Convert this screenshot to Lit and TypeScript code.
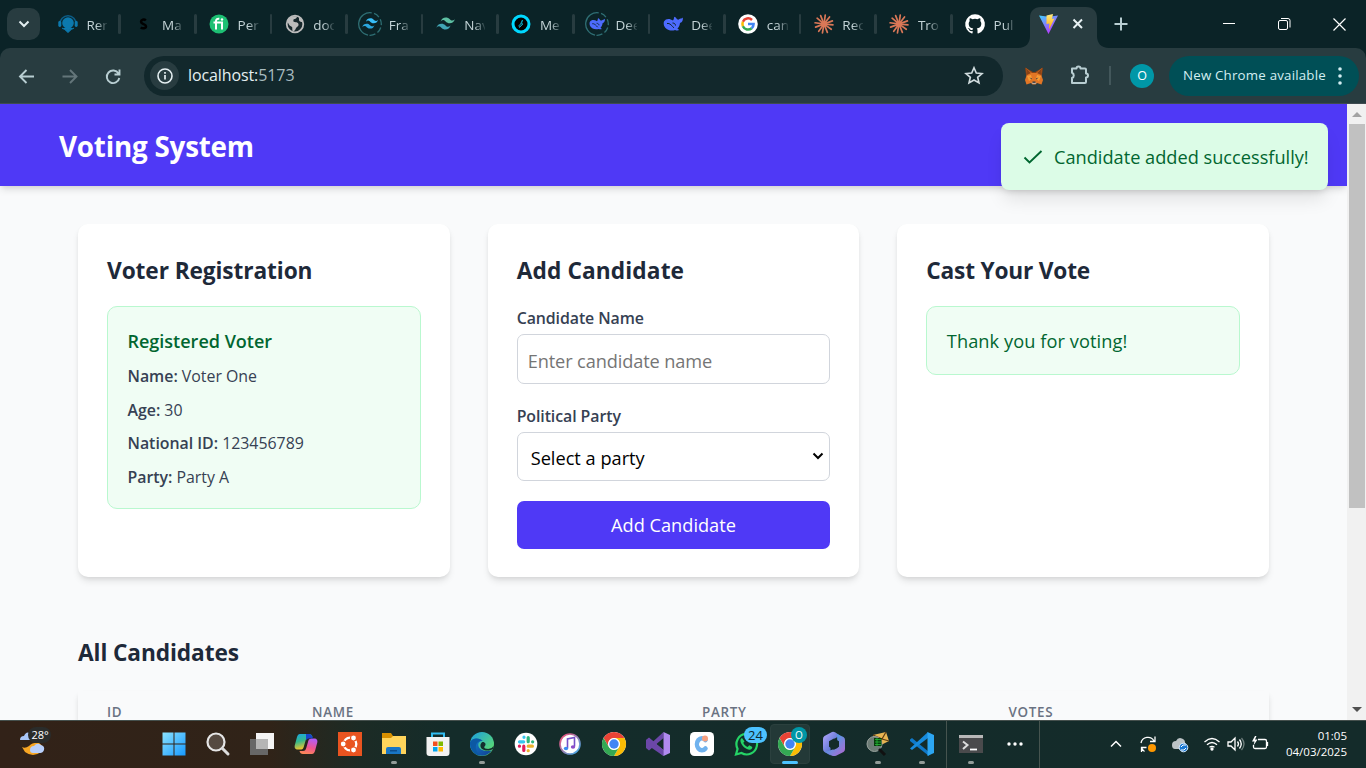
import { LitElement, html, css, svg } from "lit";
import { customElement } from "lit/decorators.js";

const swirl = (a: string, b: string) => svg`<path fill=${a} d="M6 8.600C7 5.400 9 4 12 4c4 0 4.600 3 6.600 3.500 1.500.3 2.700-.2 3.900-1.500-1 3.300-3 4.700-6 4.700-4 0-4.600-3-6.600-3.500C8.400 6.900 7.200 7.300 6 8.600z"/><path fill=${b} d="M1 14.900c1-3.200 3-4.600 6-4.600 4 0 4.600 3 6.600 3.500 1.500.3 2.700-.2 3.900-1.500-1 3.300-3 4.700-6 4.700-4 0-4.600-3-6.600-3.500-1.500-.4-2.700.1-3.900 1.400z" transform="translate(0 1)"/>`;
const ring = svg`<circle cx="12" cy="12" r="11.300" fill="none" stroke="#2f6f74" stroke-width="1.300" stroke-dasharray="35 2.500 6 2.500 6 2.500 6 2.500 6 4" transform="rotate(100 12 12)"/>`;
const whale = svg`<path fill="#4d6bfe" d="M2.500 9.500C4.500 6 8.500 6.500 11.500 8.500c1.500-1.500.5-3 1.500-3.700 1.500.3 1.800 2 3 2.700 1.500.7 1.800-1.200 3.500-1 .8-.1 1.200-.5 1.800-1.100.4 2.400-.4 5-2.800 5.600-.3 3-1.500 4.500-2.600 5.500l1.800 1.600c-1.500.8-3 .4-4.100-.1C9 19.500 4 17.500 2.600 13.700c-.4-1.300-.6-2.900-.1-4.200z"/><path d="M5.500 11.500c3-.6 5 2.500 7 4.500" stroke="#0b2327" stroke-width="1" fill="none"/><path d="M11 11c2 0 3 1.200 3 2.500" stroke="#0b2327" stroke-width="1" fill="none"/>`;
const burst = svg`<g stroke="#d97757" stroke-width="1.700" stroke-linecap="round">${[0, 30, 62, 88, 118, 150, 182, 208, 242, 270, 302, 330].map(a => svg`<path d="M12 11V3" transform="rotate(${a + 8} 12 12)"/>`)}</g><circle cx="12" cy="12" r="3" fill="#d97757"/>`;
const tabs: [string, unknown][] = [
  ["Rem", svg`<circle cx="12" cy="11" r="5.800" fill="#0c79ae"/><path d="M3.800 12a8.200 8.200 0 0 1 16.400 0" stroke="#0c5c86" stroke-width="1.600" fill="none"/><rect x="2.300" y="9" width="3" height="6" rx="1.400" fill="#0c79ae"/><rect x="18.700" y="9" width="3" height="6" rx="1.400" fill="#0c79ae"/><path d="M9.300 18h5.400L12 20.500zM6 16c3.500 2.600 8.500 2.600 12 0" stroke="#0c79ae" fill="#0c79ae"/>`],
  ["Ma", svg`<path d="M14.800 8.500c-1.600-1.800-4.800-.8-4.800 1.300 0 2.500 5 2.100 5 4.500 0 2.200-3.600 2.700-5.200 1" stroke="#000" stroke-width="2.500" fill="none"/>`],
  ["Per", svg`<circle cx="12" cy="12" r="9.500" fill="#1dbf73"/><path d="M6.500 10.500H15v7M9 17.500V9c0-2 1.500-2.500 3.300-2.300" stroke="#fff" stroke-width="2" fill="none"/><circle cx="15" cy="7.500" r="1.200" fill="#fff"/>`],
  ["doc", svg`<circle cx="12" cy="12" r="8.300" fill="#17282c" stroke="#bcbcbc" stroke-width="1.800"/><path fill="#bcbcbc" d="M4 9c2-4 6-5.500 10-4.500-.2 2-1.500 2.500-3.300 2.700-.5 1.500-.8 2.600 1 2.700 3 .2 4.500 1.500 3.600 3.800-1 1.600-2 1-2.700 3.300-.6 1.800-2 2.400-3 2.300-.5-2-.2-3-.4-4-.9-1.400-2.900-1-3.400-3zM16 5c2 1 3.600 3 4 5-2 .2-3.800-.5-4-2z"/>`],
  ["Fra", svg`${ring}<g transform="translate(3.500 3.300) scale(.74)">${swirl("#38bdf8", "#2aa5dc")}</g>`],
  ["Nav", svg`<g transform="translate(1.500 2) scale(.86)">${swirl("#5dbfa2", "#41a5b4")}</g>`],
  ["Me", svg`<circle cx="12" cy="12" r="8" fill="#000" stroke="#00d8ff" stroke-width="3"/><path d="M13.500 8l-1 3.500 1.500.5-3.500 3.500-.5-2 1.500-1.500z" fill="#0a4654" stroke="#0aa7c2" stroke-width=".9"/>`],
  ["Dee", svg`${ring}<g transform="translate(2.800 2.500) scale(.8)">${whale}</g>`],
  ["Dee", svg`<g transform="translate(.5 0)">${whale}</g>`],
  ["can", svg`<circle cx="12" cy="12" r="9.800" fill="#fff"/><g fill="none" stroke-width="2.500"><path stroke="#ea4335" d="M6.900 9.800A5.600 5.600 0 0 1 16 8"/><path stroke="#fbbc05" d="M6.900 14.200a5.600 5.600 0 0 1 0-4.400"/><path stroke="#34a853" d="M15.700 16.200a5.600 5.600 0 0 1-8.800-2"/><path stroke="#4285f4" d="M12 12h5.600a5.600 5.600 0 0 1-1.900 4.200"/></g>`],
  ["Rec", burst], ["Tro", burst],
  ["Pul", svg`<path fill="#fff" d="M12 2.300a9.800 9.800 0 0 0-3.100 19.100c.5.1.7-.2.7-.5v-1.800c-2.700.6-3.300-1.200-3.300-1.200-.4-1.100-1.100-1.400-1.100-1.400-.9-.6.1-.6.1-.6 1 .1 1.500 1 1.500 1 .9 1.500 2.300 1.100 2.800.8.1-.6.4-1.100.6-1.300-2.200-.3-4.500-1.100-4.500-4.900 0-1.100.4-1.900 1-2.600-.1-.3-.4-1.300.1-2.700 0 0 .8-.3 2.700 1a9.300 9.300 0 0 1 5 0c1.900-1.300 2.700-1 2.700-1 .5 1.400.2 2.400.1 2.700.6.7 1 1.500 1 2.600 0 3.800-2.300 4.600-4.500 4.900.4.300.7.900.7 1.800v2.700c0 .3.200.6.700.5A9.800 9.800 0 0 0 12 2.300z"/>`],
];

@customElement("browser-chrome")
class BrowserChrome extends LitElement {
  static styles = css`
    :host { display: block; background: #0b2327; font-family: "Open Sans", "Noto Sans", sans-serif; }
    svg { display: block; flex: none; }
    .strip { height: 48px; display: flex; align-items: center; padding-left: 7px; }
    .search { width: 33px; height: 32px; border-radius: 10px; background: #283c40; display: grid; place-items: center; margin-right: 5.400px; }
    .tab { width: 75.600px; box-sizing: border-box; height: 48px; padding-left: 10.500px; display: flex; align-items: center; font-size: 13.500px; color: #c3d3d6; }
    .tab svg { width: 24px; height: 24px; }
    .label { width: 21px; margin-left: 6.500px; padding-top: 1px; overflow: hidden; white-space: nowrap; -webkit-mask-image: linear-gradient(90deg, #000 50%, #0002); mask-image: linear-gradient(90deg, #000 50%, #0002); }
    .bar { width: 2.500px; height: 20px; border-radius: 2px; background: #283c40; margin-left: auto; }
    .tab.last .bar { visibility: hidden; }
    .tab.last { width: 73px; }
    .active { width: 91px; height: 41px; align-self: flex-end; display: block; margin-left: -7.500px; }
    .new { margin-left: -8.500px; }
    .window { margin-left: auto; display: flex; }
    .tools { height: 55px; background: #283c40; border-radius: 10px 10px 0 0; border-bottom: 1px solid #3f4b50; display: flex; align-items: center; }
    .omni { width: 859px; height: 40px; border-radius: 20px; background: #12282c; display: flex; align-items: center; box-sizing: border-box; padding: 0 18px 0 6px; }
    .info { width: 29px; height: 29px; border-radius: 50%; background: #283c40; display: grid; place-items: center; }
    .url { font-size: 16px; letter-spacing: -.1px; color: #a9bcc0; margin-left: 9px; padding-bottom: 2px; flex: 1; }
    .host { color: #e5eff1; }
    .fox { margin-left: 21px; }
    .puzzle { margin-left: 23.500px; }
    .line { width: 2px; height: 19px; margin: 0 19px 0 17.500px; background: #43575b; }
    .avatar { width: 24px; height: 24px; border-radius: 50%; background: #0097a7; color: #fff; font-size: 12.500px; display: grid; place-items: center; }
    .update { margin-left: 15px; width: 190px; height: 40px; border-radius: 20px; background: #004f56; color: #d3eef2; font-size: 13.300px; letter-spacing: .2px; display: flex; align-items: center; box-sizing: border-box; padding: 0 0 2px 14px; white-space: nowrap; }
    .update svg { margin: 2px 16px 0 auto; }
  `;
  render() {
    return html`
      <div class="strip">
        <div class="search"><svg width="12" height="8" viewBox="0 0 12 8"><path d="M1.500 1.500L6 6l4.500-4.500" fill="none" stroke="#e3eef0" stroke-width="2"/></svg></div>
        ${tabs.map(([t, i], n) => html`<div class="tab ${n === tabs.length - 1 ? "last" : ""}"><svg viewBox="0 0 24 24">${i}</svg><span class="label">${t}</span><i class="bar"></i></div>`)}
        <svg class="active" viewBox="0 0 91 41"><path fill="#283c40" d="M0 41c8 0 12-5 12-12V11C12 4 16 0 23 0h45c7 0 11 4 11 11v18c0 7 4 12 12 12z"/>
          <defs><linearGradient id="v" x1="0" y1="0" x2=".6" y2="1"><stop stop-color="#41d1ff"/><stop offset="1" stop-color="#bd34fe"/></linearGradient><linearGradient id="y" x1="0" y1="0" x2="0" y2="1"><stop stop-color="#ffea83"/><stop offset="1" stop-color="#ffa800"/></linearGradient></defs>
          <path fill="url(#v)" d="M21 8.500l10 1.300 9-1.300-9.500 18.500z"/><path fill="url(#y)" d="M28.500 8.500l6.500-1.500-1 5 2.500-.6-5.500 11 .4-6-2.900.7z"/>
          <path d="M55.500 12.500l8.500 8.500m0-8.500L55.500 21" stroke="#e8f2f4" stroke-width="2"/></svg>
        <svg class="new" width="40" height="32" viewBox="0 0 40 32"><path d="M20 9.500v13M13.500 16h13" stroke="#b8ced2" stroke-width="2" fill="none"/></svg>
        <svg class="window" width="166" height="32" viewBox="0 0 166 32"><path d="M23 15.500h12M133.500 10.500l12 12m0-12l-12 12" stroke="#fff" stroke-width="1.200"/><g fill="none" stroke="#fff"><rect x="78.500" y="12.500" width="9" height="9" rx="1.500"/><path d="M81 10.500h7q2 0 2 2v7"/></g></svg>
      </div>
      <div class="tools">
        <svg width="144" height="40" viewBox="0 0 144 40" fill="none" stroke-width="1.900"><path stroke="#b8ced2" d="M34 20.500H20M26.500 14L20 20.500l6.500 6.500"/><path stroke="#64767a" d="M62.500 20.500h14M70 14l6.500 6.500L70 27"/><path stroke="#b8ced2" d="M118.500 17.500a6.300 6.300 0 1 0 .8 4.500M119.500 13.500v5h-5"/></svg>
        <div class="omni"><div class="info"><svg width="18" height="18" viewBox="0 0 18 18"><circle cx="9" cy="9" r="7" fill="none" stroke="#e5eff1" stroke-width="1.600"/><path d="M9 8v4.500M9 5v1.700" stroke="#e5eff1" stroke-width="1.700"/></svg></div>
          <span class="url"><span class="host">localhost:</span>5173</span>
          <svg width="22" height="22" viewBox="0 0 24 24"><path fill="none" stroke="#d0dcde" stroke-width="1.800" d="M12 3l2.500 5.700 6.200.6-4.700 4.100 1.400 6.100-5.400-3.200-5.400 3.200L8 13.400 3.300 9.300l6.200-.6z"/></svg></div>
        <svg class="fox" width="20" height="20" viewBox="0 0 20 20"><path fill="#8b4316" d="M1 1.500L9 6h2l8-4.500-1 7-2 4H4L2 8.500z"/><path fill="#e27625" d="M2 2l6 5h4l6-5-1 6 2 6-1.500 4.500L13 17l-1.500 1.500h-3L7 17l-4.500 1.500L1 14l2-6z"/><path fill="#f89c35" d="M3 10l4-1 1 4-3 2zM17 10l-4-1-1 4 3 2z"/><path fill="#8b4316" d="M2 2l5 5-4 2zM18 2l-5 5 4 2z"/><path fill="#c0ad9e" d="M7.500 16.500h5L11.500 18h-3z"/><path fill="#233447" d="M5.500 11.500l2.500 1-.3 1zM14.500 11.500l-2.500 1 .3 1zM8.500 15.500h3v1.300h-3z"/></svg>
        <svg class="puzzle" width="24" height="24" viewBox="0 0 24 24"><path fill="none" stroke="#b8ced2" stroke-width="2" stroke-linejoin="round" d="M4.500 5.500H9a2 2 0 0 1 4 0h4.500a1 1 0 0 1 1 1v4a2 2 0 0 1 0 4v4.500a1 1 0 0 1-1 1h-13v-5a2.800 2.800 0 0 0 0-5.200z" transform="translate(-.5 -1)"/></svg>
        <i class="line"></i><div class="avatar">O</div>
        <div class="update">New Chrome available<svg width="6" height="18" viewBox="0 0 6 18" fill="#d3eef2"><circle cx="3" cy="2" r="1.800"/><circle cx="3" cy="9" r="1.800"/><circle cx="3" cy="16" r="1.800"/></svg></div>
      </div>`;
  }
}

@customElement("voting-page")
class VotingPage extends LitElement {
  static styles = css`
    :host { display: flex; overflow: hidden; background: #f9fafb; color: #1e2939; font-family: "Open Sans", "Noto Sans", sans-serif; font-size: 18.200px; min-height: 0; }
    * { box-sizing: border-box; }
    .page { width: 1347px; position: relative; overflow: hidden; }
    header { height: 82px; background: #4f39f6; color: #fff; padding: 0 59px; display: flex; align-items: center; box-shadow: 0 5px 7px -1px #0000001a, 0 2px 5px -2px #0000001a; }
    h1 { margin: 0; padding-top: 4px; font-size: 27.800px; letter-spacing: -.22px; line-height: 1; font-weight: 700; }
    main { padding: 38px 78px 0; }
    .cards { display: grid; grid-template-columns: repeat(3, 1fr); gap: 38px; height: 353px; }
    .card { background: #fff; border-radius: 10px; padding: 28px 29px; box-shadow: 0 5px 7px -1px #0000001a, 0 2px 5px -2px #0000001a; }
    h2 { margin: 0; font-size: 22.700px; line-height: 38px; height: 54px; font-weight: 700; letter-spacing: -.1px; white-space: nowrap; }
    .w2 { letter-spacing: .12px; }
    .w3 { letter-spacing: -.2px; }
    .note { border: 1px solid #b9f8cf; background: #f0fdf4; border-radius: 10px; padding: 19px 19.500px; color: #016630; line-height: 31px; white-space: nowrap; }
    .voter { height: 203px; }
    .thanks { height: 69px; letter-spacing: .08px; }
    .voter h3 { margin: 0; font-size: 18px; font-weight: 600; line-height: 31px; height: 33px; }
    .voter p { margin: 0; height: 33.600px; line-height: 34px; font-size: 15.900px; letter-spacing: -.02px; color: #364153; }
    b { font-weight: 600; }
    label { display: block; font-size: 15.900px; font-weight: 600; letter-spacing: -.08px; color: #364153; line-height: 24px; height: 28px; }
    .field { height: 50px; border: 1px solid #d1d5dc; border-radius: 7px; display: flex; align-items: center; padding: 3px 5px 0 10px; color: #757575; margin-bottom: 20px; letter-spacing: -.12px; }
    .select { height: 49px; color: #000; padding-left: 13px; justify-content: space-between; letter-spacing: 0; }
    .select svg { margin-top: -4px; }
    .button { height: 48px; border-radius: 7px; background: #4f39f6; color: #fff; display: grid; place-items: center; }
    .list { height: 57px; margin-top: 57px; }
    .table { height: 60px; background: #f9fafb; box-shadow: 0 5px 7px -1px #0000001a, 0 2px 5px -2px #0000001a; display: grid; grid-template-columns: 205px 390px 306.500px 1fr; padding: 11px 29px; font-size: 13.400px; line-height: 20px; font-weight: 600; color: #6a7282; letter-spacing: .7px; }
    .toast { position: absolute; left: 1001px; top: 19px; width: 327px; height: 67px; background: #dcfce7; color: #016630; border-radius: 8px; display: flex; align-items: center; padding-left: 20px; box-shadow: 0 12px 18px -3px #0000001a, 0 5px 7px -4px #0000001a; white-space: nowrap; }
    .toast svg { margin-right: 9px; }
    .scroll { width: 19px; background: #f1f1f1; display: flex; flex-direction: column; align-items: center; justify-content: space-between; }
    .thumb { width: 16px; height: 384px; background: #c1c1c1; margin-bottom: auto; }
    .arrow { width: 19px; height: 20px; }
  `;
  render() {
    return html`<div class="page">
      <header><h1>Voting System</h1></header>
      <main>
        <div class="cards">
          <section class="card"><h2>Voter Registration</h2><div class="note voter"><h3>Registered Voter</h3>
            <p><b>Name:</b> Voter One</p><p><b>Age:</b> 30</p><p><b>National ID:</b> 123456789</p><p><b>Party:</b> Party A</p></div></section>
          <section class="card"><h2 class="w2">Add Candidate</h2>
            <label>Candidate Name</label><div class="field">Enter candidate name</div>
            <label>Political Party</label><div class="field select">Select a party<svg width="12" height="8" viewBox="0 0 12 8"><path d="M1.500 1.500L6 6l4.500-4.500" fill="none" stroke="#000" stroke-width="2"/></svg></div>
            <div class="button">Add Candidate</div></section>
          <section class="card"><h2 class="w3">Cast Your Vote</h2><div class="note thanks">Thank you for voting!</div></section>
        </div>
        <h2 class="list">All Candidates</h2>
        <div class="table"><span>ID</span><span>NAME</span><span>PARTY</span><span>VOTES</span></div>
      </main>
      <div class="toast"><svg width="24" height="24" viewBox="0 0 24 24"><path d="M3.500 12.500l5 5L20.500 6" fill="none" stroke="#016630" stroke-width="1.900"/></svg><span>Candidate added successfully!</span></div>
    </div>
    <div class="scroll"><svg class="arrow" viewBox="0 0 19 20"><path fill="#a3a3a3" d="M5 13l5-5 5 5z"/></svg><div class="thumb"></div><svg class="arrow" viewBox="0 0 19 20"><path fill="#505050" d="M5 7l5 5 5-5z"/></svg></div>`;
  }
}

const chromeLogo = svg`<circle cx="12" cy="12" r="12" fill="#fff"/><path fill="#ea4335" d="M1.600 6A12 12 0 0 1 22.400 6H12a6 6 0 0 0-5.200 9z"/><path fill="#fbbc04" d="M22.400 6A12 12 0 0 1 12 24l5.200-9A6 6 0 0 0 12 6z"/><path fill="#34a853" d="M1.600 6A12 12 0 0 0 12 24l5.200-9a6 6 0 0 1-10.400 0z"/><circle cx="12" cy="12" r="5.800" fill="#fff"/><circle cx="12" cy="12" r="4.700" fill="#4285f4"/>`;
const grad = (id: string, a: string, b: string) => svg`<linearGradient id=${id} x1="0" y1="0" x2="1" y2="1"><stop stop-color=${a}/><stop offset="1" stop-color=${b}/></linearGradient>`;
const apps: [string, unknown, string?][] = [
  ["start", svg`<defs>${grad("w", "#8be3ff", "#1699ff")}</defs><path fill="url(#w)" d="M.5.500H11.500V11.500H.5zM12.500.500h11v11h-11zM.5 12.500h11v11H.5zM12.500 12.500h11v11h-11z"/>`],
  ["search", svg`<circle cx="10" cy="10" r="8.500" fill="#ffffff2e" stroke="#e6e6e6" stroke-width="2.200"/><path d="M16.500 16.500l5.500 5.500" stroke="#dcdcdc" stroke-width="3" stroke-linecap="round"/>`],
  ["tasks", svg`<path fill="#f4f4f4" d="M6 1h18v16H6z"/><path fill="#676767" d="M0 7h18v16H0z"/><path fill="#b5b5b5" d="M6 7h12v10H6z"/>`],
  ["copilot", svg`<defs><linearGradient id="c1" x1="0" y1="0" x2=".3" y2="1"><stop stop-color="#18a5e8"/><stop offset=".5" stop-color="#35b98b"/><stop offset="1" stop-color="#f3c62c"/></linearGradient><linearGradient id="c2" x1=".6" y1="0" x2=".3" y2="1"><stop stop-color="#b35cf5"/><stop offset=".55" stop-color="#ef558f"/><stop offset="1" stop-color="#fb8a55"/></linearGradient></defs><path fill="url(#c1)" d="M6 2h9c2 0 3 1 3.500 3H15c-2 0-2.700 1-3.400 3.500L10 14c-.7 3-1.700 3.500-4 3.500H4c-3 0-4-2-3-5L3 5c.7-2 1.500-3 3-3z"/><path fill="url(#c2)" d="M18 22H9c-2 0-3-1-3.500-3H9c2 0 2.700-1 3.400-3.500L14 10c.7-3 1.700-3.500 4-3.500h2c3 0 4 2 3 5L21 19c-.7 2-1.500 3-3 3z"/><path fill="#1744cc" d="M12 2h3c2 0 3 1 4 4.500-4-.5-6 0-7 2z"/>`],
  ["ubuntu", svg`<path fill="#e95420" d="M0 0h24v24H0z"/><circle cx="12" cy="12" r="6.300" fill="none" stroke="#fff" stroke-width="2.300"/><g fill="#fff" stroke="#e95420" stroke-width="1.200"><circle cx="5.200" cy="12" r="3"/><circle cx="15.500" cy="6" r="3"/><circle cx="15.500" cy="18" r="3"/></g>`],
  ["files", svg`<path fill="#d79000" d="M0 1h9l2 3h10v6H0z"/><path fill="#ffd45b" d="M0 6h9l2-2h13v18H0z"/><path fill="#1976c5" d="M4 22v-5q0-2 2-2h11q2 0 2 2v5z"/><path fill="#0c4e8f" d="M8 18h7v1.500H8z"/>`, "dot"],
  ["store", svg`<path d="M6 6V1.500h12V6" fill="none" stroke="#32bdf1" stroke-width="2"/><path fill="#f2f2f2" d="M.5 5h23v16q0 3-3 3h-17q-3 0-3-3z"/><path fill="#f25022" d="M7 9.500h4.500V14H7z"/><path fill="#7fba00" d="M12.500 9.500H17V14h-4.500z"/><path fill="#00a4ef" d="M7 15h4.500v4.500H7z"/><path fill="#ffb900" d="M12.500 15H17v4.500h-4.500z"/>`],
  ["edge", svg`<defs>${grad("e1", "#1b9de2", "#67e65b")}${grad("e2", "#1280d0", "#123f92")}</defs><circle cx="12" cy="12" r="12" fill="url(#e1)"/><path fill="url(#e2)" d="M0 12C1 6 9 5 12 9c-5 0-5 7 0 9 4 1.500 8 1 10 0-3 5-9 7-14 5-5-1.700-8-6-8-11z"/><path fill="#0c59a4" d="M0 10c3-5 10-4 13-1-5-1-8 3-7 8 .5 3 2 5 4 6.800C4 23-.5 16 0 10z"/><path fill="#142e2e" d="M12.500 10c3 0 4 2.500 2 4.500-.7 1 0 2 2 2.300 4 .5 6-1 7-3v3c-3 2-8 2.500-11 .5s-2.500-6 0-7.300z"/>`, "dot"],
  ["slack", svg`<circle cx="12" cy="12" r="11.300" fill="#fff"/><g stroke-width="3.200" stroke-linecap="round"><path stroke="#36c5f0" d="M5.500 9.800h4.200M10 5.200v.1"/><path stroke="#2eb67d" d="M14.200 5.500v4.200M18.600 9.800h.1"/><path stroke="#ecb22e" d="M14.200 14.200h4.200M14.200 18.600v.1"/><path stroke="#e01e5a" d="M9.800 14.200v4.200M5.400 14.200h.1"/></g>`],
  ["music", svg`<defs>${grad("m", "#fa4a70", "#3bb5f5")}</defs><circle cx="12" cy="12" r="10" fill="#fff" stroke="url(#m)" stroke-width="1.600"/><path d="M9.500 16V7l7-1.500v9" fill="none" stroke="#7550c8" stroke-width="1.600"/><ellipse cx="8" cy="16.500" rx="2.200" ry="1.800" fill="#3c8df0"/><ellipse cx="15" cy="15" rx="2.200" ry="1.800" fill="#8a4cc8"/>`],
  ["chrome", chromeLogo],
  ["vs", svg`<path fill="#8661c5" d="M17.500 0v24L0 8.500 3 6l14.500 12z"/><path fill="#6b47a8" d="M0 8l3-2.500L17.500 18v6L0 12z"/><path fill="#6b47a8" d="M0 8l3-1v10l-3-1zM0 16L17.500 0v6L3 18.500z"/><path fill="#142b2a" d="M17.500 7v10L11 12z"/><path fill="#b18af0" d="M17.500 0L24 3v18l-6.500 3z"/>`],
  ["c", svg`<rect width="24" height="24" rx="4.500" fill="#fff"/><path d="M15.500 8A5 6 0 1 0 15.500 16.500" fill="none" stroke="#6fb2ee" stroke-width="4.500" stroke-linecap="round"/><circle cx="15" cy="6.500" r="3" fill="#f6a07f"/>`],
  ["whatsapp", svg`<path d="M2 22.500l1.600-5.600A10.300 10.300 0 1 1 7.500 21z" fill="#102f2b" stroke="#25d366" stroke-width="2.200"/><path fill="#25d366" d="M8 6c-1.600.6-2 2.500-1.200 4.500 1.600 3.800 5 7 8.900 7.200 1.400 0 2.700-1.300 2.600-2.800l-3-1.600-1.700 1.700c-2-.8-3.500-2.200-4.300-4.200L10.500 9.500z"/>`],
  ["chrome2", chromeLogo, "live"],
  ["m365", svg`<defs>${grad("o1", "#b8a9ff", "#2456b8")}${grad("o2", "#20b2ef", "#b865cf")}</defs><path fill="url(#o1)" d="M10 0L2.500 4Q1 5 1 7v10q0 2 1.500 3l6 3.500V9L18 3.500 13 .300Q11.500-.500 10 0z"/><path fill="url(#o2)" d="M15 2l6.500 3Q23 6 23 8v9q0 2-1.500 3L14 23.700q-2 .8-4 0L3 20l12.500-4z"/><path fill="#142b2a" d="M12 6.500l5 2.800v5.500l-5 2.900-5-2.900V9.300z"/>`],
  ["putty", svg`<path fill="#e8b553" d="M7 3l13-3 3 9-8 4-7-1z"/><path d="M7 3l9 4 4-7M16 7l7 2" fill="none" stroke="#5d3b12" stroke-width="1.200"/><circle cx="8.500" cy="12" r="7.500" fill="#6d7c76" stroke="#9aa49f"/><path fill="#063d0b" d="M8 6h7.500v8H8z"/><path d="M9 7.500h6M9 10h6M9 12.500h6M11 6v8" stroke="#27bb38" stroke-width=".8"/><path d="M13 17l6 6" stroke="#111" stroke-width="3"/>`, "dot"],
  ["code", svg`<path fill="#0f78c8" d="M0 7.500L2 6l17 14v4L0 9z"/><path fill="#178bdc" d="M0 16.500L18 0v6L2 18z"/><path fill="#2ca6f2" d="M17.500 0L24 3v18l-6.500 3z"/>`, "dot"],
];

@customElement("task-bar")
class TaskBar extends LitElement {
  static styles = css`
    :host { display: flex; height: 48px; box-sizing: border-box; border-top: 1px solid #45504d; background: linear-gradient(90deg, #322218 0, #302318 270px, #1c2b25 360px, #142c2a 450px, #142b2a); color: #fff; font-family: "Open Sans", "Noto Sans", sans-serif; }
    svg { display: block; flex: none; overflow: visible; }
    .weather { width: 152px; }
    .cell { width: 44px; height: 47px; box-sizing: border-box; padding-bottom: 1px; position: relative; display: grid; place-items: center; }
    .cell svg { width: 24px; height: 24px; }
    .dot::after, .live::after { content: ""; position: absolute; bottom: 4.500px; width: 6px; height: 3px; border-radius: 2px; background: #929c99; }
    .live::before { content: ""; position: absolute; left: 2px; top: 3px; width: 38px; height: 38px; border: 1px solid #2b403e; border-radius: 4px; background: #233937; }
    .live::after { width: 16px; background: #4cc2ff; }
    .live svg { position: relative; }
    .badge { position: absolute; top: 6px; height: 16px; min-width: 16px; border-radius: 8px; font-size: 12px; line-height: 16px; text-align: center; }
    .count { left: 20px; width: 23px; background: #4cc2ff; color: #10282c; font-size: 13px; }
    .o { left: 23px; background: #0097a7; font-size: 10px; }
    .rule { width: 1px; background: #46544f; }
    .first { margin-left: 2px; margin-right: 2px; }
    .end { margin-left: 2px; }
    .tray { margin-left: 64px; }
    .clock { margin-left: auto; margin-right: 19px; padding-top: 7px; font-size: 11.500px; line-height: 15.500px; text-align: right; letter-spacing: 0; white-space: nowrap; }
  `;
  render() {
    return html`
      <svg class="weather" width="152" height="47" viewBox="0 0 152 47"><path fill="#f7a624" d="M22 26q3 2 7-1 4-4 10-3 6 4 2 9-8 6-16 0z"/><path fill="#a9c6f8" d="M20 20q0-4 4-4 2-5 6-3l3 7z" transform="translate(0 -1)"/><path fill="#b9d0fb" d="M30 33q0-4 4-4 3-4 7-1 4 1 3 5-1 3-4 3h-7q-3 0-3-3z" transform="translate(0 -4)"/><rect x="28" y="6" width="23" height="16" rx="8" fill="#2a2c2b"/><text x="31.500" y="18" fill="#fff" font-size="11">28°</text></svg>
      ${apps.map(([n, i, k]) => html`<div class="cell ${k ?? ""}"><svg viewBox="0 0 24 24">${i}</svg>${n === "whatsapp" ? html`<span class="badge count">24</span>` : n === "chrome2" ? html`<span class="badge o">O</span>` : ""}</div>`)}
      <i class="rule first"></i>
      <div class="cell dot"><svg viewBox="0 0 24 24"><path fill="#4a4a4c" d="M0 3h24v18H0z"/><path fill="#b8b8b8" d="M0 3h24v3H0z"/><path d="M4 9.500l4.500 3.500L4 17" fill="none" stroke="#ddd" stroke-width="2"/><path d="M11 17.500h7" stroke="#fff" stroke-width="1.800"/></svg></div>
      <div class="cell"><svg viewBox="0 0 24 24" fill="#fff"><circle cx="6" cy="12" r="1.700"/><circle cx="12" cy="12" r="1.700"/><circle cx="18" cy="12" r="1.700"/></svg></div>
      <i class="rule end"></i>
      <svg class="tray" width="170" height="47" viewBox="1104 721 170 47" fill="none" stroke="#fff" stroke-width="1.300">
        <path stroke-width="1.500" d="M1111 746.500l5-5 5 5"/>
        <path d="M1141 743a7 7 0 0 1 13-2M1155 736.500v5h-5M1141 747.500l.5 0a7 7 0 0 0 3 4M1141.500 752v-4.500h5"/><circle cx="1152" cy="748" r="4" fill="#ff9800" stroke="none"/>
        <path fill="#bcc3c6" stroke="none" d="M1172 745q0-4 4-4 2-4 6-2.500 3 1 3 4 2 5-2 6.500h-8q-3 0-3-4z"/><circle cx="1183.500" cy="747.500" r="4.300" fill="#1877d2" stroke="#d9ecff" stroke-width="1"/><path stroke-width="1" d="M1181 747l2-2h3M1186 748l-2 2h-3"/>
        <path d="M1204.500 742q7.500-7 15 0M1207 744.800q5-4.600 10 0M1209.500 747.300q2.500-2 5 0"/><circle cx="1212" cy="749" r="1" fill="#fff"/>
        <path d="M1228 742h3l4-4v12l-4-4h-3zM1237.500 741.500q2 2.500 0 5M1239.500 739.500q3.500 4.500 0 9"/><path stroke="#6d7d7b" d="M1241.500 738q5 6 0 12"/>
        <path d="M1258 739.500h7q1.500 0 1.500 1.500v6q0 1.500-1.500 1.500h-10q-1.500 0-1.500-1.500v-2M1267.500 742v4"/><path fill="#fff" stroke="none" d="M1255 736l-3 5.500h2.500l-1 4 4-6h-2.500l1.500-3.500z"/>
      </svg>
      <div class="clock">01:05<br>04/03/2025</div>`;
  }
}

@customElement("app-root")
class AppRoot extends LitElement {
  static styles = css`:host { display: grid; grid-template-rows: 104px 616px 48px; width: 1366px; height: 768px; overflow: hidden; }`;
  render() { return html`<browser-chrome></browser-chrome><voting-page></voting-page><task-bar></task-bar>`; }
}
